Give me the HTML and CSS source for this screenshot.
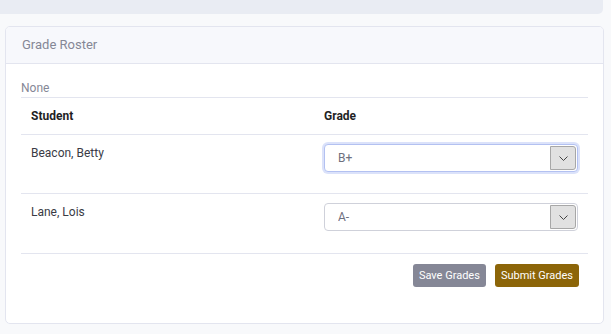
FILE: index.html
```html
<!DOCTYPE html>
<html>
<head>
  <meta charset="UTF-8">
  <title>Grade Roster</title>
  <link rel="stylesheet" href="styles.css">
</head>
<body>
  <div class="topbar"></div>

  <div class="card">
    <div class="card-header">Grade Roster</div>

    <div class="card-body">
      <div class="caption">None</div>

      <table class="roster">
        <thead>
          <tr>
            <th class="col-student">Student</th>
            <th>Grade</th>
          </tr>
        </thead>
        <tbody>
          <tr>
            <td>Beacon, Betty</td>
            <td>
              <div class="grade-select focused">
                <select>
                  <option selected>B+</option>
                  <option>A-</option>
                </select>
                <span class="arrow">
                  <svg width="9" height="5" viewBox="0 0 9 5"><path d="M0.5 0.5 L4.5 4.5 L8.5 0.5" fill="none" stroke="#444" stroke-width="1"/></svg>
                </span>
              </div>
            </td>
          </tr>
          <tr>
            <td>Lane, Lois</td>
            <td>
              <div class="grade-select">
                <select>
                  <option>B+</option>
                  <option selected>A-</option>
                </select>
                <span class="arrow">
                  <svg width="9" height="5" viewBox="0 0 9 5"><path d="M0.5 0.5 L4.5 4.5 L8.5 0.5" fill="none" stroke="#444" stroke-width="1"/></svg>
                </span>
              </div>
            </td>
          </tr>
        </tbody>
      </table>

      <div class="actions">
        <button class="btn btn-save">Save Grades</button>
        <button class="btn btn-submit">Submit Grades</button>
      </div>
    </div>
  </div>
</body>
</html>
```

FILE: styles.css
```css
:root {
  --page-bg: #f8f9fb;
  --bar-bg: #e9ecf3;
  --border-light: #e3e5ef;
  --text-muted: #858796;
  --text-body: #3a3b45;
  --gold: #8c6508;
}

body {
  margin: 0;
  font-family: Roboto, 'Liberation Sans', sans-serif;
  font-size: 12px;
  color: var(--text-body);
  background-color: var(--page-bg);
}

/* Strip left over from the block above */
.topbar {
  height: 14px;
  margin-right: 8px;
  background-color: var(--bar-bg);
  border-bottom-right-radius: 5px;
}

/* Card */
.card {
  margin: 12px 7px 0 5px;
  background: #fff;
  border: 1px solid var(--border-light);
  border-radius: 5px;
  overflow: hidden;
}

.card-header {
  padding: 10px 16px;
  line-height: 16px;
  font-size: 13px;
  color: var(--text-muted);
  background-color: #f7f8fc;
  border-bottom: 1px solid var(--border-light);
}

.card-body {
  padding: 16px 15px 36px 15px;
}

.caption {
  font-size: 12px;
  line-height: 17px;
  color: var(--text-muted);
}

/* Roster table */
.roster {
  width: 100%;
  border-collapse: collapse;
}

.roster th,
.roster td {
  text-align: left;
  vertical-align: top;
  border-top: 1px solid var(--border-light);
}

.roster th {
  padding: 10px 10px;
  line-height: 16px;
  font-weight: bold;
  color: #1f1f25;
}

.roster td {
  padding: 9px 10px 10px;
  line-height: 18px;
}

.roster tbody tr:last-child td {
  border-bottom: 1px solid var(--border-light);
}

.col-student {
  width: 273px;
}

/* Grade dropdown */
.grade-select {
  display: flex;
  height: 28px;
  margin-bottom: 11px;
  border: 1px solid #cfd1da;
  border-radius: 4px;
  background: #fff;
  box-sizing: border-box;
}

.roster tbody tr:last-child .grade-select {
  margin-bottom: 12px;
}

.grade-select.focused {
  border-color: #b3c1f1;
  box-shadow: 0 0 0 2px #dbe2fa;
}

.grade-select select {
  flex: 1;
  appearance: none;
  -webkit-appearance: none;
  border: none;
  background: transparent;
  padding: 0 13px;
  font-family: inherit;
  font-size: 12px;
  color: #6e707e;
  outline: none;
}

.arrow {
  display: flex;
  align-items: center;
  justify-content: center;
  width: 24px;
  margin: 1px 1px 1px 0;
  background-color: #e1e1e1;
  border: 1px solid #a7a7a7;
  border-radius: 0 3px 3px 0;
}

/* Buttons */
.actions {
  display: flex;
  justify-content: flex-end;
  gap: 9px;
  margin-top: 10px;
  padding-right: 9px;
}

.btn {
  height: 23px;
  padding: 0 6px;
  border: none;
  border-radius: 3px;
  font-family: inherit;
  font-size: 11px;
  color: #fff;
  cursor: pointer;
}

.btn-save {
  background-color: #858796;
}

.btn-submit {
  background-color: var(--gold);
}
```
